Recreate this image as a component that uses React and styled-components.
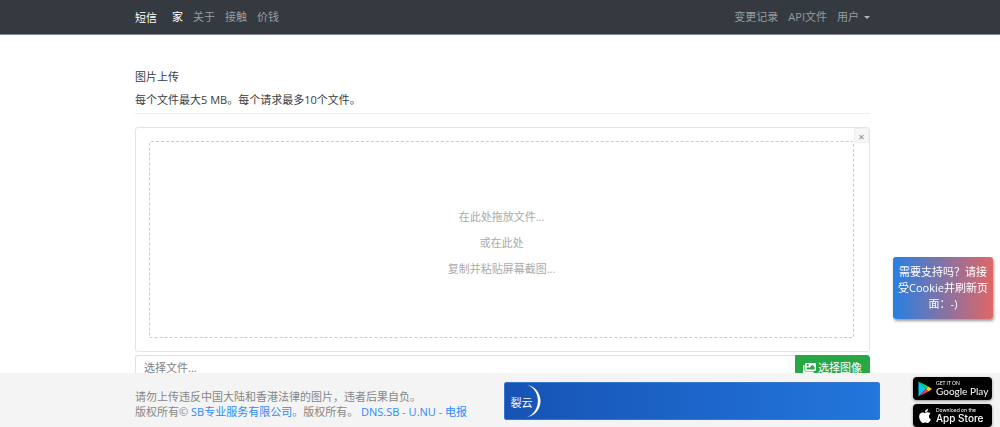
import React from 'react';
import styled, { createGlobalStyle } from 'styled-components';
import { FaImages, FaApple } from 'react-icons/fa';

const GlobalStyle = createGlobalStyle`
  * {
    box-sizing: border-box;
  }
  body {
    margin: 0;
    background: #fff;
    color: #383c40;
    font-family: 'Open Sans', 'Noto Sans CJK SC', sans-serif;
    font-size: 11px;
    line-height: 16px;
  }
  button,
  input {
    font: inherit;
  }
`;
const Navbar = styled.header`
  display: flex;
  align-items: center;
  height: 35px;
  padding: 0 130px 0 135px;
  background: #343a40;
  border-bottom: 1px solid #85888c;
`;
const Brand = styled.a`
  margin-right: 15px;
  padding-top: 2px;
  color: #fff;
  text-decoration: none;
`;
const NavList = styled.nav`
  display: flex;
  gap: 10px;
  margin-left: ${({ $end }) => ($end ? 'auto' : '0')};
`;
const NavLink = styled.a`
  color: ${({ $active }) => ($active ? '#fff' : '#999c9f')};
  text-decoration: none;
`;
const UserMenu = styled.button`
  display: flex;
  align-items: center;
  gap: 5px;
  padding: 0;
  border: 0;
  background: none;
  color: #999c9f;
  cursor: pointer;
  &::after {
    content: '';
    border-top: 3px solid #b5b7b9;
    border-left: 3px solid transparent;
    border-right: 3px solid transparent;
  }
`;
const Content = styled.main`
  padding: 34px 130px 60px 135px;
`;
const Title = styled.h1`
  margin: 0 0 7px;
  font-size: 11px;
  font-weight: 400;
`;
const Lead = styled.p`
  margin: 0;
`;
const Divider = styled.hr`
  height: 1px;
  margin: 5px 0 13px;
  border: 0;
  background: #eee;
`;
const Preview = styled.section`
  position: relative;
  padding: 13px 15px 13px 13px;
  border: 1px solid #e4e4e4;
  border-radius: 3px;
`;
const CloseButton = styled.button`
  position: absolute;
  top: 0;
  right: 0;
  display: flex;
  align-items: center;
  justify-content: center;
  width: 15px;
  height: 15px;
  padding: 2px 0 0;
  border: 1px solid #eee;
  border-radius: 2px;
  background: #f6f6f6;
  color: #888;
  font-size: 11px;
  line-height: 11px;
  cursor: pointer;
`;
const DropZone = styled.div`
  display: flex;
  flex-direction: column;
  align-items: center;
  justify-content: center;
  gap: 10px;
  min-height: 197px;
  padding-top: 6px;
  border: 1px dashed #ccc;
  border-radius: 2px;
  color: #aaa;
  p {
    margin: 0;
  }
`;
const FileRow = styled.div`
  display: flex;
  height: 26px;
  margin-top: 3px;
`;
const Caption = styled.input`
  flex: 1;
  min-width: 0;
  padding: 0 8px;
  border: 1px solid #dfe2e5;
  border-right: 0;
  border-radius: 3px 0 0 3px;
  &::placeholder {
    color: #7b8187;
    opacity: 1;
  }
`;
const BrowseButton = styled.button`
  display: flex;
  align-items: center;
  gap: 2px;
  padding: 0 7px;
  border: 1px solid #28a745;
  border-radius: 0 3px 3px 0;
  background: #28a745;
  color: #fff;
  cursor: pointer;
  svg {
    width: 13px;
    height: 12px;
  }
`;
const Support = styled.aside`
  position: fixed;
  top: 257px;
  right: 7px;
  width: 100px;
  padding: 7px 5px;
  border-radius: 3px;
  background: linear-gradient(90deg, #2780e3 0%, #e06666 100%);
  box-shadow: 1px 2px 3px rgba(0, 0, 0, 0.4);
  color: #fff;
  text-align: center;
`;
const Footer = styled.footer`
  position: fixed;
  right: 0;
  bottom: 0;
  left: 0;
  display: flex;
  align-items: flex-start;
  height: 54px;
  padding: 4px 8px 0 135px;
  background: #f4f4f4;
  color: #868686;
`;
const Legal = styled.div`
  flex: 1;
  padding-top: 12px;
  white-space: nowrap;
  a {
    color: #2a8bff;
    text-decoration: none;
  }
  p {
    margin: 0;
    line-height: 15px;
  }
`;
const Banner = styled.a`
  display: flex;
  align-items: center;
  flex: 1;
  height: 38px;
  margin: 5px 33px 0 0;
  padding-left: 6px;
  border: 1px solid #3a74cc;
  border-radius: 2px;
  background: linear-gradient(90deg, #1653b5, #2376dc);
  color: #fff;
  text-decoration: none;
  span {
    padding-top: 3px;
  }
  svg {
    width: 14px;
    height: 32px;
    margin-left: -6px;
  }
`;
const Stores = styled.div`
  display: flex;
  flex-direction: column;
  gap: 4px;
  width: 79px;
`;
const Badge = styled.a`
  display: flex;
  align-items: center;
  gap: 4px;
  height: 23px;
  padding-left: 5px;
  border-radius: 4px;
  background: #000;
  box-shadow: 0 1px 3px rgba(0, 0, 0, 0.4);
  color: #fff;
  font-family: ${({ $apple }) => ($apple ? 'Inter' : 'Lato')}, sans-serif;
  text-decoration: none;
  white-space: nowrap;
  > svg {
    flex: none;
    width: 14px;
    height: 16px;
  }
  small,
  strong {
    display: block;
  }
  small {
    font-size: 5px;
    line-height: 6px;
  }
  strong {
    font-size: 10px;
    font-weight: ${({ $apple }) => ($apple ? '500' : '400')};
    line-height: 11px;
  }
`;

const PlayLogo = () => (
  <svg viewBox='0 0 28 32' aria-hidden='true'>
    <path d='M1 1v30l15-15z' fill='#00c8f8' />
    <path d='M1 1l15 15 5-5z' fill='#00dc78' />
    <path d='M1 31l15-15 5 5z' fill='#f43b4d' />
    <path d='M16 16l5-5 7 5-7 5z' fill='#ffce00' />
  </svg>
);

const App = () => (
  <>
    <GlobalStyle />
    <Navbar>
      <Brand href='#'>短信</Brand>
      <NavList>
        <NavLink href='#' $active>
          家
        </NavLink>
        <NavLink href='#about'>关于</NavLink>
        <NavLink href='#contact'>接触</NavLink>
        <NavLink href='#pricing'>价钱</NavLink>
      </NavList>
      <NavList $end>
        <NavLink href='#changelog'>变更记录</NavLink>
        <NavLink href='#api'>API文件</NavLink>
        <UserMenu type='button'>用户</UserMenu>
      </NavList>
    </Navbar>
    <Content>
      <Title>图片上传</Title>
      <Lead>每个文件最大5 MB。每个请求最多10个文件。</Lead>
      <Divider />
      <Preview>
        <CloseButton type='button' aria-label='关闭'>
          ×
        </CloseButton>
        <DropZone>
          <p>在此处拖放文件...</p>
          <p>或在此处</p>
          <p>复制并粘贴屏幕截图...</p>
        </DropZone>
      </Preview>
      <FileRow>
        <Caption type='text' aria-label='选择文件' placeholder='选择文件...' readOnly />
        <BrowseButton type='button'>
          <FaImages />
          选择图像
        </BrowseButton>
      </FileRow>
    </Content>
    <Support>需要支持吗？请接受Cookie并刷新页面：-)</Support>
    <Footer>
      <Legal>
        <p>请勿上传违反中国大陆和香港法律的图片，违者后果自负。</p>
        <p>
          版权所有© <a href='#company'>SB专业服务有限公司</a>。版权所有。{' '}
          <a href='#dns'>DNS.SB</a> - <a href='#unu'>U.NU</a> -{' '}
          <a href='#telegram'>电报</a>
        </p>
      </Legal>
      <Banner href='#cloud'>
        <span>裂云</span>
        <svg viewBox='0 0 14 32' aria-hidden='true'>
          <path d='M0 0C18 3 18 29 0 32C14 27 15 5 0 0z' fill='#fff' />
        </svg>
      </Banner>
      <Stores>
        <Badge href='#play'>
          <PlayLogo />
          <span>
            <small>GET IT ON</small>
            <strong>Google Play</strong>
          </span>
        </Badge>
        <Badge href='#appstore' $apple>
          <FaApple />
          <span>
            <small>Download on the</small>
            <strong>App Store</strong>
          </span>
        </Badge>
      </Stores>
    </Footer>
  </>
);

export default App;
